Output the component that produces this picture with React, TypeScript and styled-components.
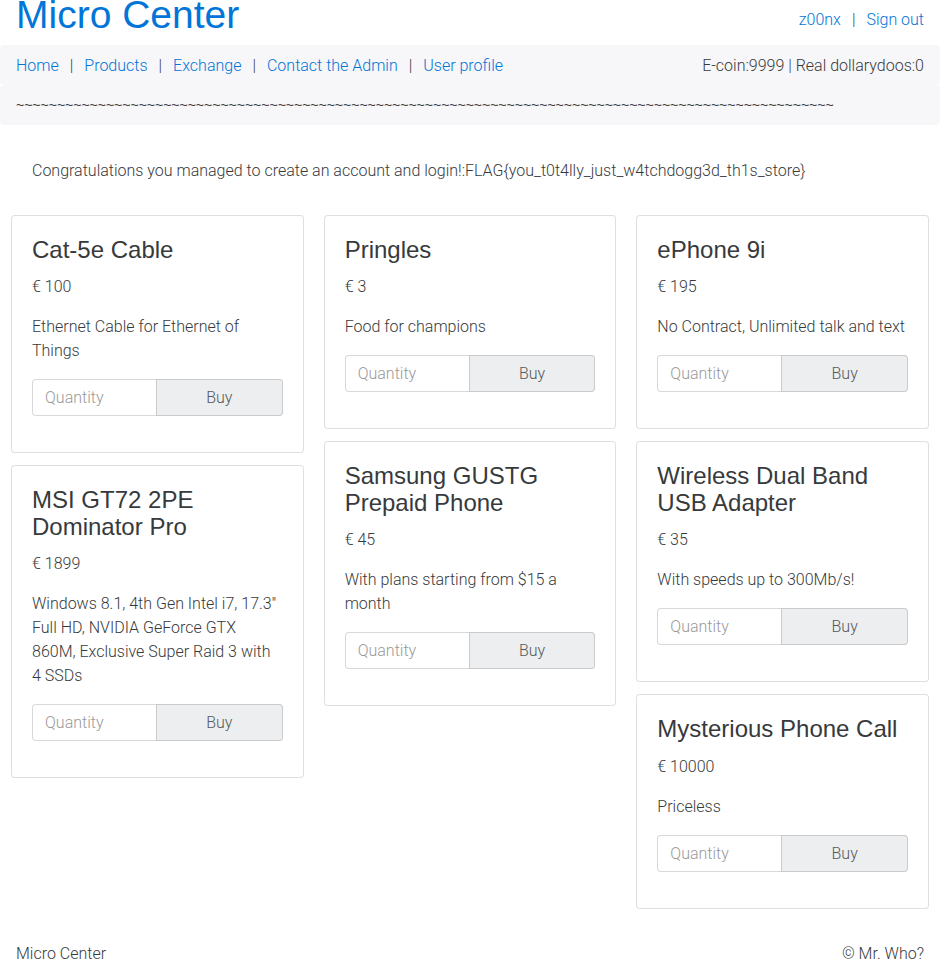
import React from "react";
import styled, { createGlobalStyle } from "styled-components";

const GlobalStyle = createGlobalStyle`
  html, body { margin: 0; padding: 0; background: #fff; }
  body {
    font-family: Roboto, "Liberation Sans", Arial, sans-serif;
    font-weight: 300;
    font-size: 16px;
    line-height: 1.5;
    color: #373a3c;
  }
  * { box-sizing: border-box; }
`;

const Page = styled.div`
  width: 940px;
  overflow: hidden;
`;

const Header = styled.header`
  display: flex;
  justify-content: space-between;
  align-items: flex-start;
  height: 45px;
  padding: 0 16px;
`;

const Brand = styled.h1`
  margin: -6px 0 0;
  font-family: "Liberation Sans", Arial, sans-serif;
  font-size: 39px;
  line-height: 1.1;
  font-weight: 400;
  color: #0275d8;
`;

const UserLinks = styled.div`
  display: flex;
  align-items: center;
  padding-top: 8px;
  line-height: 24px;
`;

const Link = styled.a`
  color: #0275d8;
  text-decoration: none;
`;

const Sep = styled.span`
  color: #373a3c;
  padding: 0 11px;
`;

const NavBar = styled.nav`
  display: flex;
  justify-content: space-between;
  align-items: center;
  background: #f7f7f9;
  border-radius: 4px;
  padding: 9px 16px 7px;
  height: 40px;
`;

const NavLinks = styled.div`
  display: flex;
  align-items: center;
`;

const Balance = styled.div`
  color: #373a3c;
`;

const Tildes = styled.div`
  background: #f7f7f9;
  border-radius: 4px;
  height: 40px;
  padding: 10px 16px 0;
  font-family: "Liberation Sans", Arial, sans-serif;
  font-weight: 400;
  font-size: 14px;
  line-height: 20px;
  color: #373a3c;
  white-space: nowrap;
  overflow: hidden;
`;

const Main = styled.main`
  padding: 34px 11px 0;
`;

const Notice = styled.p`
  margin: 0 0 32px;
  padding-left: 21px;
`;

const Columns = styled.div`
  display: grid;
  grid-template-columns: repeat(3, 1fr);
  column-gap: 20px;
  align-items: start;
`;

const Column = styled.div`
  display: flex;
  flex-direction: column;
  gap: 12px;
`;

const Card = styled.div`
  border: 1px solid rgba(0, 0, 0, 0.125);
  border-radius: 4px;
  padding: 21px 20px 20px;
  background: #fff;
`;

const Title = styled.h4`
  margin: 0 0 12px;
  font-family: "Liberation Sans", Arial, sans-serif;
  font-size: 24px;
  line-height: 1.1;
  font-weight: 400;
  color: #373a3c;
`;

const Price = styled.p`
  margin: 0 0 16px;
`;

const Desc = styled.p`
  margin: 0 0 16px;
`;

const BuyForm = styled.form`
  display: flex;
  margin: 0 0 16px;
  height: 37px;
`;

const Qty = styled.input`
  flex: 0 0 124px;
  width: 124px;
  height: 37px;
  border: 1px solid rgba(0, 0, 0, 0.15);
  border-right: none;
  border-radius: 4px 0 0 4px;
  padding: 0 12px;
  font-family: inherit;
  font-weight: 300;
  font-size: 16px;
  color: #55595c;
  background: #fff;
  &::placeholder { color: #999; }
`;

const BuyButton = styled.button`
  flex: 1;
  height: 37px;
  border: 1px solid rgba(0, 0, 0, 0.15);
  border-radius: 0 4px 4px 0;
  background: #eceeef;
  color: #55595c;
  font-family: inherit;
  font-weight: 300;
  font-size: 16px;
  padding: 0;
`;

const Footer = styled.footer`
  display: flex;
  justify-content: space-between;
  padding: 33px 16px 0;
  line-height: 24px;
`;

type Product = { name: string; price: string; desc: string };

const columns: Product[][] = [
  [
    { name: "Cat-5e Cable", price: "100", desc: "Ethernet Cable for Ethernet of Things" },
    {
      name: "MSI GT72 2PE Dominator Pro",
      price: "1899",
      desc: "Windows 8.1, 4th Gen Intel i7, 17.3'' Full HD, NVIDIA GeForce GTX 860M, Exclusive Super Raid 3 with 4 SSDs",
    },
  ],
  [
    { name: "Pringles", price: "3", desc: "Food for champions" },
    { name: "Samsung GUSTG Prepaid Phone", price: "45", desc: "With plans starting from $15 a month" },
  ],
  [
    { name: "ePhone 9i", price: "195", desc: "No Contract, Unlimited talk and text" },
    { name: "Wireless Dual Band USB Adapter", price: "35", desc: "With speeds up to 300Mb/s!" },
    { name: "Mysterious Phone Call", price: "10000", desc: "Priceless" },
  ],
];

const ProductCard = ({ p }: { p: Product }) => (
  <Card>
    <Title>{p.name}</Title>
    <Price>€ {p.price}</Price>
    <Desc>{p.desc}</Desc>
    <BuyForm onSubmit={(e) => e.preventDefault()}>
      <Qty placeholder="Quantity" />
      <BuyButton type="submit">Buy</BuyButton>
    </BuyForm>
  </Card>
);

const navItems = ["Home", "Products", "Exchange", "Contact the Admin", "User profile"];

export default function App() {
  return (
    <Page>
      <GlobalStyle />
      <Header>
        <Brand>Micro Center</Brand>
        <UserLinks>
          <Link href="#">z00nx</Link>
          <Sep>|</Sep>
          <Link href="#">Sign out</Link>
        </UserLinks>
      </Header>
      <NavBar>
        <NavLinks>
          {navItems.map((item, i) => (
            <React.Fragment key={item}>
              {i > 0 && <Sep>|</Sep>}
              <Link href="#">{item}</Link>
            </React.Fragment>
          ))}
        </NavLinks>
        <Balance>E-coin:9999 | Real dollarydoos:0</Balance>
      </NavBar>
      <Tildes>{"~".repeat(100)}</Tildes>
      <Main>
        <Notice>
          Congratulations you managed to create an account and login!:FLAG{"{"}you_t0t4lly_just_w4tchdogg3d_th1s_store{"}"}
        </Notice>
        <Columns>
          {columns.map((col, ci) => (
            <Column key={ci}>
              {col.map((p) => (
                <ProductCard key={p.name} p={p} />
              ))}
            </Column>
          ))}
        </Columns>
      </Main>
      <Footer>
        <span>Micro Center</span>
        <span>© Mr. Who?</span>
      </Footer>
    </Page>
  );
}
